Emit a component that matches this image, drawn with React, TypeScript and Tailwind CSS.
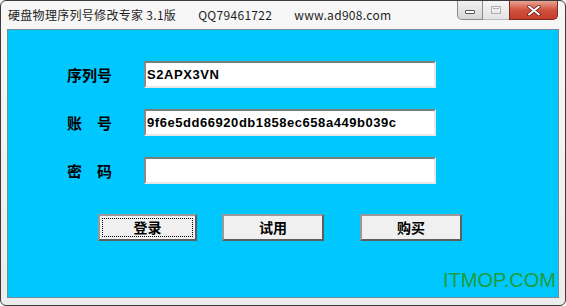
export default function App() {
  const cjk = { fontFamily: '"Noto Sans CJK SC", "Liberation Sans", sans-serif' }

  return (
    <div className="h-[306px] w-[566px] bg-white">
      <div className="relative flex h-[306px] w-[566px] flex-col rounded-[6px] border border-[#3b3b3b] bg-gradient-to-b from-[#f7f7f7] to-[#ececec]">
        {/* title bar */}
        <div className="flex h-[28px] items-start text-[12px] text-[#1e1e1e]" style={cjk}>
          <span className="ml-[7px] mt-[6px] leading-[16px] tracking-[0.3px]">硬盘物理序列号修改专家 3.1版</span>
          <span className="ml-[22px] mt-[6px] leading-[16px] tracking-[0.3px]">QQ79461722</span>
          <span className="ml-[22px] mt-[6px] leading-[16px] tracking-[0.3px]">www.ad908.com</span>
          <div className="ml-auto mr-[7px] flex h-[19px]">
            <div className="flex w-[26px] items-center justify-center rounded-bl-[5px] border border-t-0 border-[#8a8a8a] bg-gradient-to-b from-[#f2f2f2] to-[#d6d6d6]">
              <div className="mt-[3px] h-[4px] w-[10px] rounded-[1px] border border-[#555] bg-white" />
            </div>
            <div className="flex w-[26px] items-center justify-center border-b border-[#b9b9b9] bg-gradient-to-b from-[#f6f6f6] to-[#e4e4e4]">
              <div className="h-[8px] w-[10px] border border-[#b0b0b0] p-[1px]">
                <div className="h-full w-full border-t border-[#b0b0b0]" />
              </div>
            </div>
            <div className="flex w-[49px] items-center justify-center rounded-br-[5px] border border-t-0 border-[#7a2a22] bg-gradient-to-b from-[#e9a293] via-[#d0503c] to-[#c43c2a]">
              <svg width="14" height="11" viewBox="0 0 14 11">
                <path d="M2 1.5 L12 9.5 M12 1.5 L2 9.5" stroke="#5a1a12" strokeWidth="3.4" strokeLinecap="round" />
                <path d="M2 1.5 L12 9.5 M12 1.5 L2 9.5" stroke="#ffffff" strokeWidth="2" strokeLinecap="round" />
              </svg>
            </div>
          </div>
        </div>

        {/* client area */}
        <div className="relative mx-[6px] h-[269px] border border-[#6f8e9b] bg-[#00c8fe]">
          <div className="flex flex-col gap-[21px] pl-[59px] pt-[31px]">
            {[
              { label: '序列号', value: 'S2APX3VN' },
              { label: '账　号', value: '9f6e5dd66920db1858ec658a449b039c' },
              { label: '密　码', value: '' },
            ].map((row) => (
              <div key={row.label} className="flex h-[27px] items-center">
                <span className="w-[77px] text-[15px] font-bold leading-none text-black" style={cjk}>
                  {row.label}
                </span>
                <div className="flex h-[27px] w-[292px] items-center border-2 border-t-[#7d7d7d] border-l-[#8a8a8a] border-b-[#e8e8e8] border-r-[#e8e8e8] bg-white pl-[1px]">
                  <span
                    className="text-[13px] font-bold leading-none text-black"
                    style={{ fontFamily: '"Liberation Sans", Arial, sans-serif', letterSpacing: '0.55px' }}
                  >
                    {row.value}
                  </span>
                </div>
              </div>
            ))}
          </div>

          <div className="flex pl-[90px] pt-[30px]">
            <button className="flex h-[27px] w-[99px] items-center justify-center border-2 border-t-[#9a9a9a] border-l-[#9a9a9a] border-b-[#5e5e5e] border-r-[#5e5e5e] bg-[#f0f0f0] p-[2px]">
              <span className="flex h-full w-full items-center justify-center border border-dotted border-black text-[14px] font-bold text-black" style={cjk}>
                登录
              </span>
            </button>
            <button className="ml-[25px] flex h-[27px] w-[102px] items-center justify-center border-2 border-t-[#9a9a9a] border-l-[#9a9a9a] border-b-[#5e5e5e] border-r-[#5e5e5e] bg-[#f0f0f0] text-[14px] font-bold text-black" style={cjk}>
              试用
            </button>
            <button className="ml-[36px] flex h-[27px] w-[102px] items-center justify-center border-2 border-t-[#9a9a9a] border-l-[#9a9a9a] border-b-[#5e5e5e] border-r-[#5e5e5e] bg-[#f0f0f0] text-[14px] font-bold text-black" style={cjk}>
              购买
            </button>
          </div>

          <span
            className="absolute bottom-[7px] right-[2px] text-[20px] leading-none text-[#1f9c3a]"
            style={{ fontFamily: '"Liberation Sans", Arial, sans-serif' }}
          >
            ITMOP.COM
          </span>
        </div>
      </div>
    </div>
  )
}
